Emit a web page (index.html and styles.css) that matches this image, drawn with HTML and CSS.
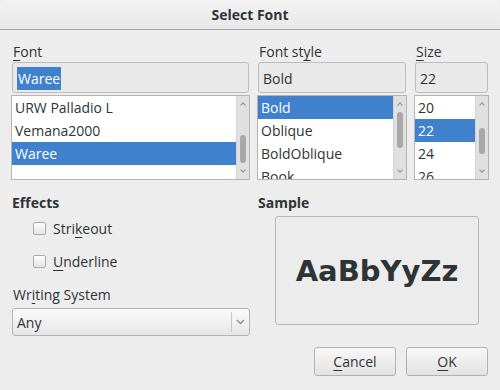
FILE: index.html
```html
<!DOCTYPE html>
<html lang="en">
<head>
  <meta charset="UTF-8" />
  <title>Select Font</title>
  <link rel="stylesheet" href="styles.css">
</head>
<body>
  <div class="dialog">
    <header class="titlebar">Select Font</header>

    <div class="pickers">
      <div class="picker picker-family">
        <label class="field-label"><u>F</u>ont</label>
        <div class="entry"><span class="selection">Waree</span></div>
        <div class="list">
          <ul class="rows">
            <li>URW Palladio L</li>
            <li>Vemana2000</li>
            <li class="selected">Waree</li>
          </ul>
          <div class="scrollbar">
            <span class="arrow up"></span>
            <span class="thumb" style="top: 39px; height: 28px;"></span>
            <span class="arrow down"></span>
          </div>
        </div>
      </div>

      <div class="picker picker-style">
        <label class="field-label">Font st<u>y</u>le</label>
        <div class="entry">Bold</div>
        <div class="list">
          <ul class="rows">
            <li class="selected">Bold</li>
            <li>Oblique</li>
            <li>BoldOblique</li>
            <li>Book</li>
          </ul>
          <div class="scrollbar">
            <span class="arrow up"></span>
            <span class="thumb" style="top: 16px; height: 36px;"></span>
            <span class="arrow down"></span>
          </div>
        </div>
      </div>

      <div class="picker picker-size">
        <label class="field-label"><u>S</u>ize</label>
        <div class="entry">22</div>
        <div class="list">
          <ul class="rows">
            <li>20</li>
            <li class="selected">22</li>
            <li>24</li>
            <li>26</li>
          </ul>
          <div class="scrollbar">
            <span class="arrow up"></span>
            <span class="thumb" style="top: 32px; height: 26px;"></span>
            <span class="arrow down"></span>
          </div>
        </div>
      </div>
    </div>

    <div class="lower">
      <div class="left-col">
        <h3 class="group-title">Effects</h3>
        <div class="checks">
          <label class="check"><span class="box"></span><span>Stri<u>k</u>eout</span></label>
          <label class="check"><span class="box"></span><span><u>U</u>nderline</span></label>
        </div>
        <label class="field-label ws-label">Wr<u>i</u>ting System</label>
        <div class="combo">
          <span class="combo-text">Any</span>
          <span class="combo-arrow">
            <svg width="9" height="6" viewBox="0 0 9 6"><path d="M1 1 L4.5 4.5 L8 1" fill="none" stroke="#8a8f8f" stroke-width="1.4"/></svg>
          </span>
        </div>
      </div>

      <div class="right-col">
        <h3 class="group-title">Sample</h3>
        <div class="sample">AaBbYyZz</div>
      </div>
    </div>

    <div class="buttons">
      <button class="btn"><u>C</u>ancel</button>
      <button class="btn"><u>O</u>K</button>
    </div>
  </div>
</body>
</html>
```

FILE: styles.css
```css
* {
  box-sizing: border-box;
}

body {
  margin: 0;
  width: 500px;
  height: 390px;
  background: #ededed;
  font-family: 'Open Sans', 'Noto Sans', sans-serif;
  font-size: 14px;
  color: #2e3436;
  overflow: hidden;
}

u {
  text-decoration: underline;
  text-underline-offset: 3px;
}

.dialog {
  height: 390px;
}

.titlebar {
  height: 30px;
  background: linear-gradient(#f2f2f2, #e8e8e8);
  border-bottom: 1px solid #a4a4a4;
  border-radius: 6px 6px 0 0;
  text-align: center;
  font-weight: bold;
  line-height: 29px;
  color: #2e3436;
}

/* font / style / size pickers */
.pickers {
  display: flex;
  gap: 7px;
  padding: 10px 0 0 11px;
}

.picker {
  display: flex;
  flex-direction: column;
}

.picker-family { width: 239px; }
.picker-style { width: 150px; }
.picker-size { width: 75px; }

.field-label {
  display: block;
  height: 22px;
  padding: 2px 0 0 2px;
  line-height: 20px;
}

.entry {
  height: 31px;
  margin: 0 1px 2px;
  border: 1px solid #bcbcbc;
  border-radius: 3px;
  background: #e9e9e9;
  padding: 2px 4px 0;
  line-height: 27px;
}

.selection {
  background: #3f81cd;
  color: #fff;
  padding: 2px 1px;
}

.list {
  position: relative;
  height: 85px;
  border: 1px solid #b4b4b4;
  background: #fff;
  display: flex;
  overflow: hidden;
}

.rows {
  list-style: none;
  margin: 0;
  padding: 0;
  flex: 1;
}

.rows li {
  height: 23px;
  line-height: 23px;
  padding-left: 3px;
  white-space: nowrap;
}

.rows li.selected {
  background: #3f81cd;
  color: #fff;
}

.scrollbar {
  position: relative;
  width: 13px;
  background: #e0e0e0;
  border-left: 1px solid #d4d4d4;
}

.thumb {
  position: absolute;
  left: 3px;
  width: 6px;
  background: #a8a8a8;
  border-radius: 3px;
}

.arrow {
  position: absolute;
  left: 4px;
  width: 4px;
  height: 4px;
  border-left: 1px solid #8e8e8e;
  border-top: 1px solid #8e8e8e;
}

.arrow.up {
  top: 7px;
  transform: rotate(45deg);
}

.arrow.down {
  bottom: 7px;
  transform: rotate(225deg);
}

/* effects, writing system, sample */
.lower {
  display: flex;
  gap: 8px;
  padding: 14px 0 0 12px;
}

.left-col {
  width: 238px;
}

.right-col {
  flex: 1;
}

.group-title {
  margin: 0;
  font-size: 14px;
  font-weight: bold;
  line-height: 18px;
}

.checks {
  display: flex;
  flex-direction: column;
  gap: 15px;
  padding: 7px 0 0 21px;
}

.check {
  display: flex;
  align-items: center;
  gap: 7px;
  height: 18px;
}

.box {
  width: 13px;
  height: 13px;
  border: 1px solid #a9a9a9;
  border-radius: 2px;
  background: linear-gradient(#fdfdfd, #e4e4e4);
}

.ws-label {
  margin-top: 13px;
  padding-left: 1px;
  height: 25px;
}

.combo {
  display: flex;
  align-items: center;
  height: 28px;
  border: 1px solid #b4b4b4;
  border-radius: 3px;
  background: linear-gradient(#fbfbfb, #e6e6e6);
}

.combo-text {
  flex: 1;
  padding-left: 4px;
}

.combo-arrow {
  display: flex;
  align-items: center;
  justify-content: center;
  width: 18px;
  height: 20px;
  border-left: 1px solid #c8c8c8;
}

.sample {
  margin: 4px 21px 0 17px;
  height: 109px;
  border: 1px solid #b8b8b8;
  border-radius: 3px;
  background: #ececec;
  display: flex;
  align-items: center;
  justify-content: center;
  font-family: 'DejaVu Sans', sans-serif;
  font-weight: bold;
  font-size: 29px;
  color: #2e3436;
}

/* dialog buttons */
.buttons {
  display: flex;
  justify-content: flex-end;
  gap: 10px;
  padding: 11px 12px 0 0;
}

.btn {
  width: 82px;
  height: 29px;
  font-family: inherit;
  font-size: 14px;
  color: #2e3436;
  border: 1px solid #b1b1b1;
  border-radius: 3px;
  background: linear-gradient(#f8f8f8, #e2e2e2);
}
```
